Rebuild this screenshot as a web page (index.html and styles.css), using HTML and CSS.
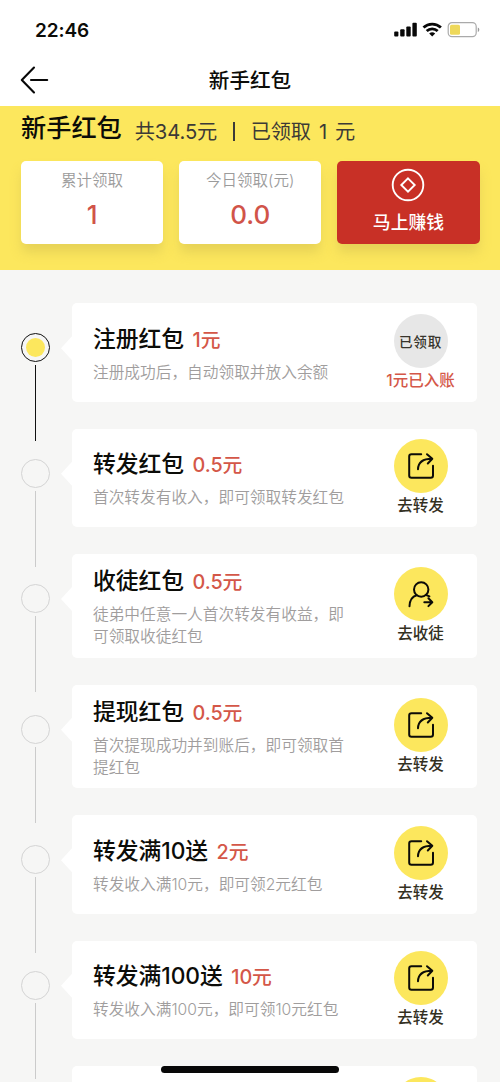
FILE: index.html
```html
<!DOCTYPE html>
<html lang="zh-CN">
<head>
<meta charset="utf-8">
<title>新手红包</title>
<link rel="stylesheet" href="styles.css">
</head>
<body>
<svg class="defs" aria-hidden="true">
  <symbol id="share" viewBox="0 0 28 28">
    <path d="M14.2 2.3H4.5Q2.2 2.3 2.2 4.6V23.5Q2.2 25.8 4.5 25.8H23.7Q26 25.8 26 23.5V13.8"/>
    <path d="M11 17.3C11.2 11.5 15 6.8 25 6.8M20 2.2L25.3 6.8L20.8 11.5"/>
  </symbol>
  <symbol id="invite" viewBox="0 0 28 28">
    <circle cx="14.2" cy="9.5" r="7.2"/>
    <path d="M2.5 26.2C2.7 20.5 5 16.5 9.7 15.2M18.8 14.8L22.4 16.3M17.3 22.2H25.2M21.4 18.3L25.3 22.2L21.4 26.1"/>
  </symbol>
</svg>
<div class="screen">
  <div class="status">
    <span class="time">22:46</span>
    <svg class="indicators" width="88" height="20" viewBox="0 0 88 20">
      <g fill="#080808"><rect x="0.2" y="11.4" width="4.2" height="5.2" rx="1"/><rect x="6.2" y="9.2" width="4.4" height="7.4" rx="1"/><rect x="12.3" y="6.4" width="4.4" height="10.2" rx="1"/><rect x="18.4" y="2.8" width="4.4" height="13.8" rx="1"/></g>
      <g fill="none" stroke="#080808" stroke-width="2.8"><path d="M29.5 7.6A12.6 12.6 0 0 1 46.9 7.6"/><path d="M32.7 11A8 8 0 0 1 43.7 11"/></g>
      <path d="M35.2 13.5A4.5 4.5 0 0 1 41.2 13.5L38.2 16.5Z" fill="#080808"/>
      <rect x="54.2" y="2.6" width="28" height="14" rx="3.8" fill="none" stroke="#aaa" stroke-width="1.2"/>
      <rect x="56" y="4.7" width="10" height="10" rx="1.5" fill="#eed85a"/>
      <path d="M83.8 7.5Q85.3 8.1 85.3 9.8T83.8 12.1Z" fill="#999"/>
    </svg>
  </div>
  <div class="nav">
    <svg class="back" width="30" height="28" viewBox="0 0 30 28"><path d="M14 1.5L1.8 14L14 26.5M11 14H27.2" fill="none" stroke="#080808" stroke-width="2.1" stroke-linecap="round" stroke-linejoin="round"/></svg>
    <div class="nav-title">新手红包</div>
  </div>
  <div class="hero">
    <div class="summary">
      <h1 class="heading">新手红包</h1>
      <div class="totals"><span>共34.5元</span><span class="divider"></span><span class="claimed">已领取 1 元</span></div>
    </div>
    <div class="stats">
      <div class="stat"><div class="stat-label">累计领取</div><div class="stat-value">1</div></div>
      <div class="stat"><div class="stat-label">今日领取(元)</div><div class="stat-value">0.0</div></div>
      <div class="stat earn">
        <svg width="34" height="34" viewBox="0 0 34 34" fill="none" stroke="#fff" stroke-width="1.9"><circle cx="17" cy="17" r="15.3"/><path d="M17 10.3L23.7 17L17 23.7L10.3 17Z"/></svg>
        <div class="earn-label">马上赚钱</div>
      </div>
    </div>
  </div>
  <div class="list">
    <div class="row">
      <div class="track done"><div class="dot"></div><div class="line"></div></div>
      <div class="card">
        <div class="info"><div class="title">注册红包<span class="price">1元</span></div><div class="desc">注册成功后，自动领取并放入余额</div></div>
        <div class="action received"><div class="circle">已领取</div><div class="label">1元已入账</div></div>
      </div>
    </div>
    <div class="row">
      <div class="track"><div class="dot"></div><div class="line"></div></div>
      <div class="card">
        <div class="info"><div class="title">转发红包<span class="price">0.5元</span></div><div class="desc">首次转发有收入，即可领取转发红包</div></div>
        <div class="action"><div class="circle"><svg class="icon"><use href="#share"/></svg></div><div class="label">去转发</div></div>
      </div>
    </div>
    <div class="row">
      <div class="track"><div class="dot"></div><div class="line"></div></div>
      <div class="card tall">
        <div class="info"><div class="title">收徒红包<span class="price">0.5元</span></div><div class="desc">徒弟中任意一人首次转发有收益，即可领取收徒红包</div></div>
        <div class="action"><div class="circle"><svg class="icon"><use href="#invite"/></svg></div><div class="label">去收徒</div></div>
      </div>
    </div>
    <div class="row">
      <div class="track"><div class="dot"></div><div class="line"></div></div>
      <div class="card tall">
        <div class="info"><div class="title">提现红包<span class="price">0.5元</span></div><div class="desc">首次提现成功并到账后，即可领取首提红包</div></div>
        <div class="action"><div class="circle"><svg class="icon"><use href="#share"/></svg></div><div class="label">去转发</div></div>
      </div>
    </div>
    <div class="row">
      <div class="track"><div class="dot"></div><div class="line"></div></div>
      <div class="card">
        <div class="info"><div class="title">转发满10送<span class="price">2元</span></div><div class="desc">转发收入满10元，即可领2元红包</div></div>
        <div class="action"><div class="circle"><svg class="icon"><use href="#share"/></svg></div><div class="label">去转发</div></div>
      </div>
    </div>
    <div class="row">
      <div class="track"><div class="dot"></div><div class="line"></div></div>
      <div class="card">
        <div class="info"><div class="title">转发满100送<span class="price">10元</span></div><div class="desc">转发收入满100元，即可领10元红包</div></div>
        <div class="action"><div class="circle"><svg class="icon"><use href="#share"/></svg></div><div class="label">去转发</div></div>
      </div>
    </div>
    <div class="row">
      <div class="track"></div>
      <div class="card plain">
        <div class="info"></div>
        <div class="action"><div class="circle"></div><div class="label"></div></div>
      </div>
    </div>
  </div>
  <div class="home-bar"></div>
</div>
</body>
</html>
```
FILE: styles.css
```css
* { box-sizing: border-box; }
body {
  margin: 0;
  font-family: Inter, "Noto Sans CJK SC", sans-serif;
  color: #0c0c08;
}
.defs { display: none; }
.screen {
  position: relative;
  display: flex;
  flex-direction: column;
  width: 500px;
  height: 1082px;
  overflow: hidden;
  background: #f6f6f5;
}
.status {
  flex: none;
  height: 54px;
  padding: 20px 13px 0 35px;
  display: flex;
  justify-content: space-between;
  align-items: flex-start;
  background: #fff;
}
.time { font-size: 19px; line-height: 21px; font-weight: 600; letter-spacing: -0.1px; }
.indicators { margin-right: 5px; }
.nav {
  flex: none;
  height: 52px;
  padding: 0 20px;
  display: grid;
  grid-template-columns: 30px 1fr 30px;
  align-items: center;
  background: #fff;
}
.nav-title { padding-top: 2px; text-align: center; font-size: 20.6px; line-height: 30px; font-weight: 500; }
.hero {
  flex: none;
  height: 163.5px;
  padding: 0 20.5px 0 21px;
  background: #fce75d;
}
.summary { display: flex; height: 55px; }
.heading { margin: 4px 0 0; font-size: 25.2px; line-height: 36px; font-weight: 500; }
.totals {
  display: flex;
  align-items: center;
  height: 30px;
  margin: 9px 0 0 13px;
  font-size: 20.2px;
  font-weight: 400;
  letter-spacing: -0.1px;
  color: #3c3a36;
}
.claimed { word-spacing: 2.4px; }
.divider { width: 1.5px; height: 19px; margin: 2px 16px 0; background: #3c3a38; }
.stats { display: grid; grid-template-columns: repeat(3, 1fr); gap: 16px; }
.stat {
  height: 83px;
  border-radius: 5px;
  background: #fff;
  text-align: center;
  box-shadow: 0 9px 12px -1px rgba(205, 185, 80, 0.45);
}
.stat-label { padding-top: 8px; font-size: 15.5px; line-height: 24px; font-weight: 350; color: #9b9b9b; }
.stat-value { margin-top: 5px; font-size: 26px; line-height: 34px; font-weight: 500; color: #d15449; }
.earn {
  padding-top: 7px;
  display: flex;
  flex-direction: column;
  align-items: center;
  background: #c83026;
}
.earn-label { margin-top: 8px; font-size: 17.8px; line-height: 26px; font-weight: 500; color: #fff; }
.list {
  flex: none;
  padding: 33.8px 23px 0 21px;
  display: flex;
  flex-direction: column;
  gap: 27px;
}
.row { display: flex; }
.track {
  width: 29px;
  height: 98px;
  margin-right: 22px;
  padding-top: 30px;
  display: flex;
  flex-direction: column;
  align-items: center;
}
.row:has(.tall) .track { height: 103.6px; }
.dot {
  flex: none;
  width: 29px;
  height: 29px;
  border: 1.5px solid #d4d4d4;
  border-radius: 50%;
}
.line { flex: none; width: 1.5px; height: 76px; margin-top: 3px; background: #cbcbcb; }
.done .dot { padding: 4px; border-color: #111; }
.done .dot::before {
  content: "";
  display: block;
  width: 19px;
  height: 19px;
  border-radius: 50%;
  background: #fce75d;
}
.done .line { background: #111; }
.card {
  position: relative;
  flex: 1;
  height: 98.4px;
  padding: 1.8px 29px 0 21px;
  border-radius: 5px;
  background: #fff;
  display: flex;
  align-items: center;
  justify-content: space-between;
}
.card.tall { height: 103.6px; }
.card::before {
  content: "";
  position: absolute;
  left: -11px;
  top: 33px;
  width: 11px;
  height: 24px;
  background: #fff;
  clip-path: polygon(100% 0, 0 50%, 100% 100%);
}
.card.plain::before { display: none; }
.info { width: 260px; }
.title { font-size: 22.8px; line-height: 32px; font-weight: 500; white-space: nowrap; letter-spacing: -0.05px; }
.price { margin-left: 8.5px; font-size: 19.8px; color: #d45748; }
.desc { width: 254px; margin-top: 6px; font-size: 15.7px; line-height: 22px; font-weight: 350; color: #a09d9d; }
.action { width: 55px; display: flex; flex-direction: column; align-items: center; }
.circle {
  flex: none;
  width: 54px;
  height: 54px;
  border-radius: 50%;
  background: #fce75d;
  display: flex;
  align-items: center;
  justify-content: center;
}
.icon {
  width: 28px;
  height: 28px;
  fill: none;
  stroke: #0c0c08;
  stroke-width: 2;
  stroke-linecap: round;
  stroke-linejoin: round;
}
.label { height: 25px; font-size: 15.5px; line-height: 25px; font-weight: 500; color: #33301f; white-space: nowrap; }
.received .circle { background: #e7e7e7; color: #37342c; font-size: 13.6px; font-weight: 500; letter-spacing: 0.7px; white-space: nowrap; }
.received .label { color: #d45748; }
.home-bar {
  position: absolute;
  left: 161px;
  top: 1066px;
  width: 178px;
  height: 6.5px;
  border-radius: 4px;
  background: #080808;
}
```
